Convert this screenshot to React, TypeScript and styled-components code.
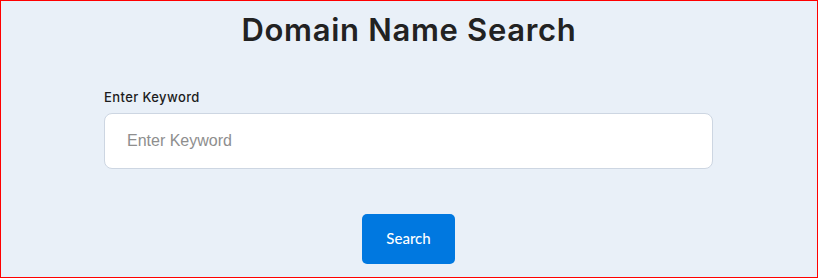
import styled, { createGlobalStyle } from "styled-components";

const GlobalStyle = createGlobalStyle`
  * { box-sizing: border-box; }
  html, body { margin: 0; padding: 0; }
  body { background: #e9f0f8; }
`;

const Page = styled.div`
  width: 818px;
  height: 278px;
  border: 1px solid #ff0000;
  background: #e9f0f8;
  display: flex;
  flex-direction: column;
  align-items: center;
  padding-top: 8px;
  font-family: Inter, "Noto Sans", sans-serif;
  overflow: hidden;
`;

const Title = styled.h1`
  margin: 0;
  font-size: 31px;
  line-height: 42px;
  font-weight: 600;
  color: #222222;
  letter-spacing: 0.7px;
`;

const Form = styled.form`
  width: 609px;
  margin-top: 37px;
  margin-right: 1px;
  display: flex;
  flex-direction: column;
`;

const Label = styled.label`
  font-size: 13px;
  font-weight: 500;
  color: #1c1c1c;
  line-height: 18px;
  letter-spacing: 0.4px;
  margin-bottom: 7px;
`;

const Input = styled.input`
  height: 56px;
  width: 100%;
  border: 1px solid #cdd6e2;
  border-radius: 8px;
  background: #ffffff;
  padding: 0 22px;
  font-family: "Liberation Sans", Arial, sans-serif;
  font-size: 16px;
  color: #333;
  outline: none;
  &::placeholder {
    color: #8e8e8e;
  }
`;

const Actions = styled.div`
  display: flex;
  justify-content: center;
  margin-top: 45px;
`;

const Button = styled.button`
  width: 93px;
  height: 50px;
  border: none;
  border-radius: 5px;
  background: #0078e0;
  color: #ffffff;
  font-family: Lato, Inter, sans-serif;
  font-size: 15px;
  font-weight: 500;
  padding: 0 0 3px;
  cursor: pointer;
`;

export default function App() {
  return (
    <>
      <GlobalStyle />
      <Page>
        <Title>Domain Name Search</Title>
        <Form onSubmit={(e) => e.preventDefault()}>
          <Label htmlFor="keyword">Enter Keyword</Label>
          <Input id="keyword" placeholder="Enter Keyword" />
          <Actions>
            <Button type="submit">Search</Button>
          </Actions>
        </Form>
      </Page>
    </>
  );
}
